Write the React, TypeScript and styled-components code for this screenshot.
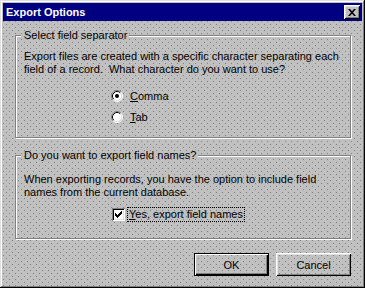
import React from 'react';
import styled, { createGlobalStyle, css } from 'styled-components';

const GlobalStyle = createGlobalStyle`
  body {
    margin: 0;
    font-family: "Liberation Sans", Arial, sans-serif;
    font-size: 11px;
    color: #000;
  }
`;

// win9x dithered gray, fixed so every patterned part lines up
const dither = css`
  background-color: #c0c0c0;
  background-image:
    conic-gradient(at 1px 1px, transparent 75%, #808080 0),
    conic-gradient(at 1px 1px, transparent 75%, #808080 0);
  background-size: 6px 6px, 6px 6px;
  background-position: 0 0, 3px 3px;
  background-attachment: fixed;
`;

const Radio = ({ checked }: { checked?: boolean }) => (
  <svg width="12" height="12" viewBox="0 0 12 12">
    <circle cx="6" cy="6" r="5" fill="#fff" />
    <path d="M2.11 9.89 A5.5 5.5 0 0 1 9.89 2.11" stroke="#808080" fill="none" />
    <path d="M9.89 2.11 A5.5 5.5 0 0 1 2.11 9.89" stroke="#fff" fill="none" />
    <path d="M2.82 9.18 A4.5 4.5 0 0 1 9.18 2.82" stroke="#000" fill="none" />
    <path d="M9.18 2.82 A4.5 4.5 0 0 1 2.82 9.18" stroke="#dfdfdf" fill="none" />
    {checked && <circle cx="6" cy="6" r="2" fill="#000" />}
  </svg>
);

const App: React.FC = () => {
  return (
    <>
      <GlobalStyle />
      <Window>
        <TitleBar>
          <span>Export Options</span>
          <CloseButton>
            <svg width="8" height="7" viewBox="0 0 8 7">
              <path d="M0 0h2l2 2.2L6 0h2L5 3.5 8 7H6L4 4.8 2 7H0l3-3.5z" fill="#000" />
            </svg>
          </CloseButton>
        </TitleBar>
        <Body>
          <GroupBox $padTop={8} $padBottom={12}>
            <Legend>Select field separator</Legend>
            <Text>
              Export files are created with a specific character separating each
              <br />
              field of a record.&nbsp; What character do you want to use?
            </Text>
            <OptionList>
              <OptionRow>
                <Radio checked />
                <span><U>C</U>omma</span>
              </OptionRow>
              <OptionRow>
                <Radio />
                <span><U>T</U>ab</span>
              </OptionRow>
            </OptionList>
          </GroupBox>
          <GroupBox $padTop={11} $padBottom={16} $gap={11}>
            <Legend>Do you want to export field names?</Legend>
            <Text>
              When exporting records, you have the option to include field
              <br />
              names from the current database.
            </Text>
            <CheckRow>
              <CheckBox>
                <svg width="7" height="7" viewBox="0 0 7 7">
                  <path d="M0 2h1v3H0z M1 3h1v3H1z M2 4h1v3H2z M3 3h1v3H3z M4 2h1v3H4z M5 1h1v3H5z M6 0h1v3H6z" fill="#000" />
                </svg>
              </CheckBox>
              <FocusLabel><U>Y</U>es, export field names</FocusLabel>
            </CheckRow>
          </GroupBox>
          <ButtonRow>
            <Button $default>OK</Button>
            <Button>Cancel</Button>
          </ButtonRow>
        </Body>
      </Window>
    </>
  );
};

export default App;

const Window = styled.div`
  box-sizing: border-box;
  width: 365px;
  height: 288px;
  padding: 3px;
  display: flex;
  flex-direction: column;
  ${dither}
  box-shadow: inset -1px -1px #000, inset 1px 1px #dfdfdf,
    inset -2px -2px #808080, inset 2px 2px #fff;
`;

const TitleBar = styled.div`
  height: 18px;
  display: flex;
  align-items: center;
  justify-content: space-between;
  padding: 0 2px 0 3px;
  background: #000080;
  color: #fff;
  font-weight: bold;
  font-size: 11px;
`;

const CloseButton = styled.div`
  box-sizing: border-box;
  width: 16px;
  height: 14px;
  display: flex;
  align-items: center;
  justify-content: center;
  background: #c0c0c0;
  box-shadow: inset 1px 1px #fff, inset -1px -1px #000,
    inset 2px 2px #dfdfdf, inset -2px -2px #808080;
`;

const Body = styled.div`
  flex: 1;
  display: flex;
  flex-direction: column;
  padding: 8px 11px 9px 12px;
`;

const GroupBox = styled.fieldset<{ $padTop: number; $padBottom: number; $gap?: number }>`
  margin: ${p => p.$gap || 0}px 0 0 0;
  padding: ${p => p.$padTop}px 8px ${p => p.$padBottom}px 8px;
  border: 1px solid #808080;
  box-shadow: inset 1px 1px #fff, 1px 1px #fff;
  min-width: 0;
`;

const Legend = styled.legend`
  padding: 0 2px 0 3px;
  margin-left: -3px;
  line-height: 13px;
  ${dither}
`;

const Text = styled.p`
  margin: 0;
  line-height: 13px;
`;

const OptionList = styled.div`
  display: flex;
  flex-direction: column;
  gap: 5px;
  margin: 12px 0 0 87px;
`;

const OptionRow = styled.label`
  display: flex;
  align-items: center;
  gap: 7px;
  height: 16px;
`;

const U = styled.span`
  text-decoration: underline;
`;

const CheckRow = styled.label`
  display: flex;
  align-items: center;
  gap: 2px;
  height: 16px;
  margin: 7px 0 0 88px;
`;

const CheckBox = styled.span`
  box-sizing: border-box;
  width: 13px;
  height: 13px;
  display: flex;
  align-items: center;
  justify-content: center;
  background: #fff;
  box-shadow: inset 1px 1px #808080, inset -1px -1px #fff,
    inset 2px 2px #000, inset -2px -2px #dfdfdf;
`;

const FocusLabel = styled.span`
  padding: 0 1px;
  border: 1px dotted #000;
  line-height: 13px;
`;

const ButtonRow = styled.div`
  display: flex;
  justify-content: flex-end;
  gap: 7px;
  margin-top: 14px;
`;

const Button = styled.button<{ $default?: boolean }>`
  width: 75px;
  height: 23px;
  padding: 0;
  border: none;
  font: inherit;
  color: #000;
  ${dither}
  box-shadow: ${p =>
    p.$default
      ? 'inset 0 0 0 1px #000, inset 2px 2px #fff, inset -2px -2px #000, inset -3px -3px #808080'
      : 'inset 1px 1px #fff, inset -1px -1px #000, inset 2px 2px #dfdfdf, inset -2px -2px #808080'};
`;
